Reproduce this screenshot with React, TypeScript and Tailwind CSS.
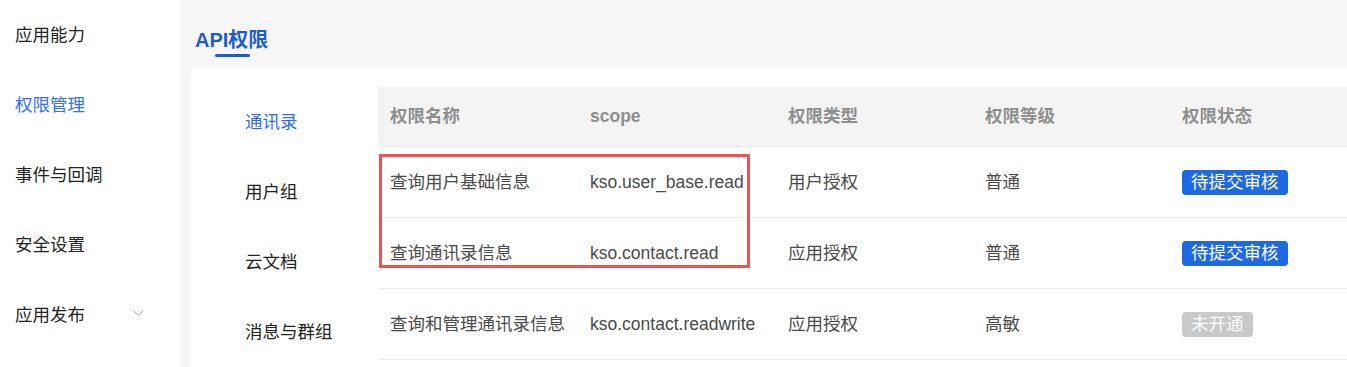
import React from "react";

const FONT = {
  fontFamily: '"Liberation Sans", "Noto Sans CJK SC", sans-serif',
};

interface Perm {
  name: string;
  scope: string;
  type: string;
  level: string;
  status: "pending" | "off";
}

const menu = [
  { label: "应用能力" },
  { label: "权限管理", active: true },
  { label: "事件与回调" },
  { label: "安全设置" },
  { label: "应用发布", arrow: true },
];

const tabs = ["通讯录", "用户组", "云文档", "消息与群组"];

const perms: Perm[] = [
  { name: "查询用户基础信息", scope: "kso.user_base.read", type: "用户授权", level: "普通", status: "pending" },
  { name: "查询通讯录信息", scope: "kso.contact.read", type: "应用授权", level: "普通", status: "pending" },
  { name: "查询和管理通讯录信息", scope: "kso.contact.readwrite", type: "应用授权", level: "高敏", status: "off" },
];

const cols = "grid grid-cols-[200px_198px_197px_197px_1fr]";

const StatusTag = ({ status }: { status: Perm["status"] }) =>
  status === "pending" ? (
    <span className="inline-flex h-[25px] items-center rounded-[4px] bg-[#1f69de] px-[9px] text-[17.5px] text-white">
      待提交审核
    </span>
  ) : (
    <span className="inline-flex h-[25px] items-center rounded-[4px] bg-[#c9c9c9] px-[9px] text-[17.5px] text-white">
      未开通
    </span>
  );

export default function App() {
  return (
    <div className="flex h-[367px] w-[1347px] overflow-hidden bg-[#f7f7f8]" style={FONT}>
      {/* --- Sidebar --- */}
      <aside className="w-[180px] shrink-0 bg-white">
        {menu.map((m) => (
          <div
            key={m.label}
            className={`flex h-[70px] items-center justify-between pl-[15px] pr-[36px] text-[17.5px] ${
              m.active ? "text-[#3370f0]" : "text-[#222]"
            }`}
          >
            <span>{m.label}</span>
            {m.arrow && (
              <svg width="11" height="7" viewBox="0 0 11 7" fill="none" className="-mt-[3px]">
                <path d="M0.5 0.5 L5.5 5.5 L10.5 0.5" stroke="#a9afbb" strokeWidth="1" />
              </svg>
            )}
          </div>
        ))}
      </aside>

      {/* --- Main --- */}
      <main className="flex flex-1 flex-col pl-[10px]">
        <div className="flex h-[67px] flex-col pl-[5px] pt-[28px]">
          <h1 className="relative w-fit text-[20px] font-bold leading-[24px] text-[#1d5bd2]">
            API权限
            <span className="absolute left-[20px] top-[26px] h-[3px] w-[35px] rounded-full bg-[#1d5bd2]" />
          </h1>
        </div>

        <div className="flex flex-1 rounded-tl-[10px] bg-white pt-[20px]">
          {/* Tabs */}
          <div className="w-[188px] shrink-0">
            {tabs.map((t, i) => (
              <div
                key={t}
                className={`flex h-[70px] items-center pl-[55px] text-[17.5px] ${
                  i === 0 ? "text-[#2f6de8]" : "text-[#222]"
                }`}
              >
                {t}
              </div>
            ))}
          </div>

          {/* Table */}
          <div className="relative flex-1">
            <div className={`${cols} h-[60px] items-center border-b border-[#ebebf0] bg-[#f4f4f5] text-[17.5px] font-bold text-[#8e8e8e]`}>
              {["权限名称", "scope", "权限类型", "权限等级", "权限状态"].map((h) => (
                <div key={h} className="pl-3">
                  {h}
                </div>
              ))}
            </div>
            {perms.map((p) => (
              <div
                key={p.scope}
                className={`${cols} h-[71px] items-center border-b border-[#ebebf0] text-[17.5px] text-[#4a4a4a]`}
              >
                <div className="whitespace-nowrap pl-3">{p.name}</div>
                <div className="whitespace-nowrap pl-3">{p.scope}</div>
                <div className="pl-3">{p.type}</div>
                <div className="pl-3">{p.level}</div>
                <div className="pl-3">
                  <StatusTag status={p.status} />
                </div>
              </div>
            ))}

            {/* highlight box */}
            <div className="pointer-events-none absolute left-[1px] top-[67px] h-[114px] w-[371px] border-[3px] border-[#ef5350]" />
          </div>
        </div>
      </main>
    </div>
  );
}
